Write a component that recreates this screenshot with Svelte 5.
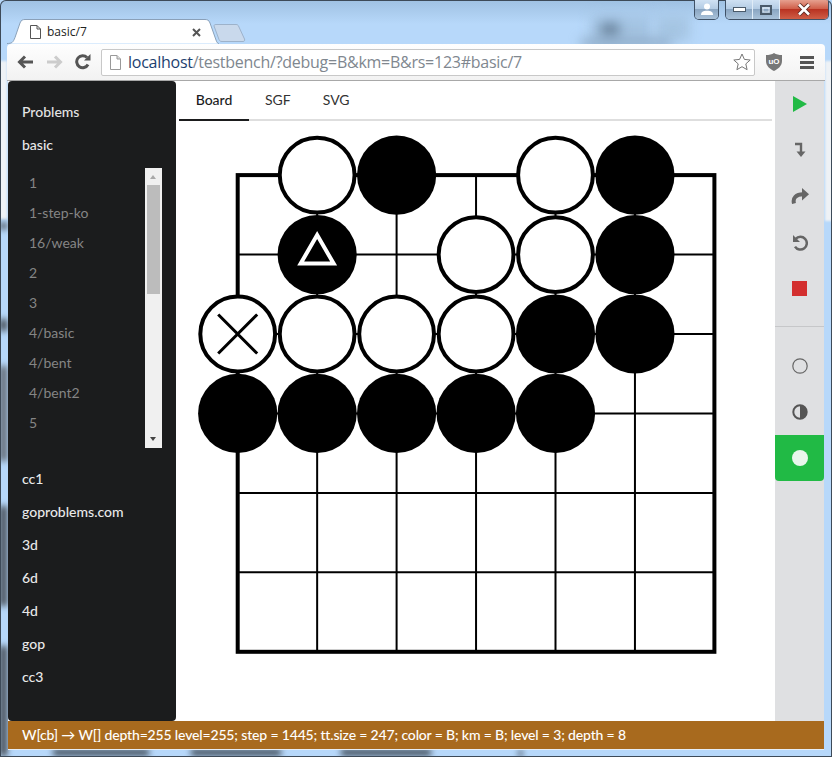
<script lang="ts">
  // Go problem testbench inside a browser window
  const topItems = ['Problems', 'basic']
  const problems = ['1', '1-step-ko', '16/weak', '2', '3', '4/basic', '4/bent', '4/bent2', '5']
  const otherItems = ['cc1', 'goproblems.com', '3d', '6d', '4d', 'gop', 'cc3']
  const tabs = ['Board', 'SGF', 'SVG']
  let activeTab = $state('Board')

  // board geometry, in svg units
  const x0 = 61.7
  const y0 = 54.1
  const step = 79.45
  const lines = [0, 1, 2, 3, 4, 5, 6]
  const px = (i: number) => x0 + i * step
  const py = (i: number) => y0 + i * step

  type Stone = { c: number; r: number; color: 'B' | 'W'; mark?: 'tri' | 'x' }
  const stones: Stone[] = [
    { c: 1, r: 0, color: 'W' }, { c: 2, r: 0, color: 'B' }, { c: 4, r: 0, color: 'W' }, { c: 5, r: 0, color: 'B' },
    { c: 1, r: 1, color: 'B', mark: 'tri' }, { c: 3, r: 1, color: 'W' }, { c: 4, r: 1, color: 'W' }, { c: 5, r: 1, color: 'B' },
    { c: 0, r: 2, color: 'W', mark: 'x' }, { c: 1, r: 2, color: 'W' }, { c: 2, r: 2, color: 'W' }, { c: 3, r: 2, color: 'W' },
    { c: 4, r: 2, color: 'B' }, { c: 5, r: 2, color: 'B' },
    { c: 0, r: 3, color: 'B' }, { c: 1, r: 3, color: 'B' }, { c: 2, r: 3, color: 'B' }, { c: 3, r: 3, color: 'B' }, { c: 4, r: 3, color: 'B' }
  ]
</script>

<div class="window">
  <div class="desktop" aria-hidden="true">
    <i class="blob b1"></i><i class="blob b2"></i><i class="blob b3"></i><i class="blob b4"></i>
    <i class="edge s1"></i><i class="edge s2"></i>
    <i class="edge e1"></i><i class="edge e2"></i><i class="edge e3"></i><i class="edge e8"></i><i class="edge e9"></i>
    <i class="edge e4"></i><i class="edge e5"></i><i class="edge e6"></i><i class="edge e7"></i>
  </div>

  <div class="controls">
    <div class="ctl user">
      <svg width="14" height="13" viewBox="0 0 14 13"><circle cx="7" cy="3.6" r="3" fill="#fff"/><path d="M1 12c0-3 2-4.200 6-4.200s6 1.200 6 4.200z" fill="#fff"/></svg>
    </div>
    <div class="group">
      <div class="ctl min"><svg width="13" height="6" viewBox="0 0 13 6"><rect x=".5" y=".5" width="12" height="4" fill="#fff" stroke="#4a5a6a"/></svg></div>
      <div class="ctl max"><svg width="12" height="10" viewBox="0 0 12 10"><rect x="1" y="1" width="10" height="8" fill="none" stroke="#4a5a6a" stroke-width="2"/><rect x="3" y="3" width="6" height="4" fill="none" stroke="#fff" stroke-width=".6"/></svg></div>
      <div class="ctl close"><svg width="16" height="13" viewBox="0 0 16 13"><path d="M3 1.500l10 10M13 1.500l-10 10" stroke="#5b2a22" stroke-width="4.400"/><path d="M3 1.500l10 10M13 1.500l-10 10" stroke="#fff" stroke-width="2.600"/></svg></div>
    </div>
  </div>

  <div class="tabstrip">
    <div class="tab">
      <svg class="tab-shape" width="212" height="25" viewBox="0 0 212 25"><path d="M0 24.500c5 0 6-1 8-6L13 4c1-3 3-3.500 5-3.500h180c2 0 4 .5 5 3.500l6 17c1 3 2 3.500 3 3.500" fill="#fff" stroke="#8aa0b8"/></svg>
      <svg class="page-icon" width="11" height="14" viewBox="0 0 11 14"><path d="M.5.5h6.500l3.500 3.500v9.500h-10z M7 .5v3.500h3.500" fill="#fff" stroke="#555"/></svg>
      <span class="tab-title">basic/7</span>
      <svg class="tab-x" width="9" height="9" viewBox="0 0 9 9"><path d="M1 1l7 7M8 1l-7 7" stroke="#555" stroke-width="2"/></svg>
    </div>
    <svg class="newtab" width="33" height="18" viewBox="0 0 33 18"><path d="M1 2c0-1 .5-1.500 2-1.500h20c1.500 0 2 .5 2.500 1.500l6 13c.5 1.500 0 2.500-1.500 2.500H9c-1.500 0-2.500-.5-3-2z" fill="#c9d9ec" stroke="#9db2ca"/></svg>
  </div>

  <div class="toolbar">
    <svg class="nav" width="17" height="14" viewBox="0 0 17 14"><path d="M16 7H4M8 1.500 2.500 7 8 12.500" fill="none" stroke="#555" stroke-width="3"/></svg>
    <svg class="nav fwd" width="17" height="14" viewBox="0 0 17 14"><path d="M1 7h12M9 1.500 14.500 7 9 12.500" fill="none" stroke="#ccc" stroke-width="3"/></svg>
    <svg class="nav reload" width="16" height="16" viewBox="0 0 16 16"><path d="M13 10.500A6 6 0 1 1 12 3.500" fill="none" stroke="#555" stroke-width="3"/><path d="M9 6.500h6.500V0z" fill="#555"/></svg>
    <div class="urlbar">
      <svg width="11" height="15" viewBox="0 0 11 15"><path d="M.5.500h6.500l3.500 3.500v10.500h-10z" fill="#fff" stroke="#999"/><path d="M7 .5v3.500h3.500" fill="#ddd" stroke="#999"/></svg>
      <span class="url"><b>localhost</b>/testbench/?debug=B&amp;km=B&amp;rs=123#basic/7</span>
      <svg class="star" width="18" height="18" viewBox="0 0 18 18"><path d="M9 1l2.400 5.400 5.800.6-4.400 3.900 1.300 5.800L9 13.700l-5.100 3 1.300-5.800L.8 7l5.800-.6z" fill="#fff" stroke="#777"/></svg>
    </div>
    <svg class="shield" width="16" height="18" viewBox="0 0 16 18">
      <path d="M8 0c2 1.500 5 2 8 2v6c0 5-4 8-8 10-4-2-8-5-8-10V2c3 0 6-.5 8-2z" fill="#777"/>
      <text x="8" y="11" text-anchor="middle" class="uo">uO</text>
    </svg>
    <div class="burger"><i></i><i></i><i></i></div>
  </div>

  <div class="main">
    <nav class="sidebar">
      {#each topItems as item}
        <div class="item" class:head={item === 'Problems'}>{item}</div>
      {/each}
      <div class="listbox">
        <ul>
          {#each problems as p}
            <li>{p}</li>
          {/each}
        </ul>
        <div class="scrollbar">
          <i class="arrow up"></i>
          <i class="thumb"></i>
          <i class="arrow down"></i>
        </div>
      </div>
      {#each otherItems as item}
        <div class="item">{item}</div>
      {/each}
    </nav>

    <section class="content">
      <div class="tabmenu">
        {#each tabs as t}
          <button type="button" class:active={activeTab === t} onclick={() => activeTab = t}>{t}</button>
        {/each}
      </div>
      <svg class="board" width="596" height="600" viewBox="0 0 596 600">
        {#each lines as i}
          <line x1={px(i)} y1={y0} x2={px(i)} y2={py(6)} stroke="#000" stroke-width="2"/>
          <line x1={x0} y1={py(i)} x2={px(6)} y2={py(i)} stroke="#000" stroke-width="2"/>
        {/each}
        <rect x={x0} y={y0} width={step * 6} height={step * 6} fill="none" stroke="#000" stroke-width="4"/>
        {#each stones as s}
          {#if s.color === 'B'}
            <circle cx={px(s.c)} cy={py(s.r)} r="39.600" fill="#000"/>
          {:else}
            <circle cx={px(s.c)} cy={py(s.r)} r="37.400" fill="#fff" stroke="#000" stroke-width="4"/>
          {/if}
          {#if s.mark === 'tri'}
            <path d="M{px(s.c)} {py(s.r) - 19.500}L{px(s.c) + 16.500} {py(s.r) + 9}H{px(s.c) - 16.500}Z" fill="none" stroke="#fff" stroke-width="4"/>
          {:else if s.mark === 'x'}
            <path d="M{px(s.c) - 19.500} {py(s.r) - 19.500}L{px(s.c) + 19.500} {py(s.r) + 19.500}M{px(s.c) + 19.500} {py(s.r) - 19.500}L{px(s.c) - 19.500} {py(s.r) + 19.500}" stroke="#000" stroke-width="3"/>
          {/if}
        {/each}
      </svg>
    </section>

    <aside class="rail">
      <div class="tool"><svg width="16" height="16" viewBox="0 0 16 16"><path d="M1 0l14 8L1 16z" fill="#21ba45"/></svg></div>
      <div class="tool"><svg width="12" height="16" viewBox="0 0 12 16"><path d="M1 2h6v8" fill="none" stroke="#666" stroke-width="2.400"/><path d="M2.500 9.500h9L7 15z" fill="#666"/></svg></div>
      <div class="tool"><svg width="18" height="16" viewBox="0 0 18 16"><path d="M3 15.500C1.500 10 5 6.300 12 6.300" fill="none" stroke="#666" stroke-width="4"/><path d="M11 0l7 6.300-7 6.300z" fill="#666"/></svg></div>
      <div class="tool"><svg width="16" height="17" viewBox="0 0 16 17"><path d="M3.600 5A6.400 6.400 0 1 1 3 12.600" fill="none" stroke="#666" stroke-width="2.500"/><path d="M1 1v7h7z" fill="#666"/></svg></div>
      <div class="tool"><span class="stop"></span></div>
      <hr />
      <div class="tool"><svg width="16" height="16" viewBox="0 0 16 16"><circle cx="8" cy="8" r="7.200" fill="none" stroke="#666" stroke-width="1.200"/></svg></div>
      <div class="tool"><svg width="16" height="16" viewBox="0 0 16 16"><circle cx="8" cy="8" r="6.700" fill="none" stroke="#555" stroke-width="2"/><path d="M8 1.500a6.500 6.500 0 0 1 0 13z" fill="#555"/></svg></div>
      <div class="tool on"><svg width="16" height="16" viewBox="0 0 16 16"><circle cx="8" cy="8" r="8" fill="#e8f6ec"/></svg></div>
    </aside>
  </div>

  <footer class="status">W[cb] → W[] depth=255 level=255; step = 1445; tt.size = 247; color = B; km = B; level = 3; depth = 8</footer>
</div>

<style>
  :global(body) { margin: 0; background: #b6d7f8; }

  .window {
    position: relative;
    width: 832px;
    height: 757px;
    box-sizing: border-box;
    padding: 0 7px 8px 7px;
    overflow: hidden;
    display: flex;
    flex-direction: column;
    border-radius: 6px 6px 0 0;
    background: linear-gradient(180deg, #9fc1e2 0, #b7d8fa 24px, #b7d8fa 100%);
    box-shadow: inset 0 0 0 1px #3d4a58;
  }

  /* blurred desktop seen through the aero frame */
  .desktop { position: absolute; inset: 1px; overflow: hidden; }
  .blob { position: absolute; filter: blur(6px); }
  .b1 { left: 590px; top: 14px; width: 60px; height: 30px; background: #a3c3e2; }
  .b2 { left: 600px; top: 22px; width: 18px; height: 14px; background: #6c86a0; }
  .b3 { left: 655px; top: 14px; width: 34px; height: 26px; background: #a5c5e3; }
  .b4 { left: 580px; top: 38px; width: 90px; height: 8px; background: #8ba7c2; }
  .edge { position: absolute; background: #20262c; filter: blur(3px); }
  .s1 { left: -3px; top: 60px; width: 9px; height: 158px; background: #eef2f6; filter: blur(1px); }
  .s2 { right: -3px; top: 60px; width: 9px; height: 160px; background: #eef2f6; filter: blur(1px); }
  .e1 { left: -1px; top: 365px; width: 7px; height: 95px; background: #5a5f66; }
  .e2 { left: -1px; top: 505px; width: 7px; height: 100px; background: #3c4046; }
  .e3 { left: -1px; top: 645px; width: 7px; height: 110px; background: #3c4046; }
  .e8 { left: -1px; top: 222px; width: 7px; height: 6px; background: #3c4046; }
  .e9 { left: -1px; top: 318px; width: 7px; height: 12px; background: #3c4046; }
  .e4 { left: 52px; top: 749px; width: 96px; height: 5px; }
  .e5 { left: 190px; top: 749px; width: 90px; height: 5px; }
  .e6 { left: 340px; top: 749px; width: 90px; height: 5px; }
  .e7 { left: 518px; top: 749px; width: 3px; height: 7px; }

  .controls {
    position: absolute;
    top: 0;
    right: 4px;
    display: flex;
    gap: 8px;
    z-index: 2;
  }
  .group { display: flex; border-radius: 0 0 4px 4px; overflow: hidden; box-shadow: 0 0 0 1px #3f5166; }
  .ctl {
    height: 19px;
    display: flex;
    align-items: center;
    justify-content: center;
    background: linear-gradient(180deg, #cfe1f3 0, #b4cce4 45%, #8ba6c2 50%, #a9c2da 100%);
  }
  .user { width: 23px; border-radius: 0 0 4px 4px; box-shadow: 0 0 0 1px #3f5166; }
  .min, .max { width: 27px; border-right: 1px solid #e0ecf7; box-sizing: border-box; }
  .close { width: 48px; background: linear-gradient(180deg, #e6a08f 0, #d0604b 45%, #b93322 50%, #cf5e46 100%); }

  .tabstrip {
    position: relative;
    height: 44px;
    flex: none;
    display: flex;
    align-items: flex-end;
  }
  .tab {
    position: relative;
    width: 212px;
    height: 24px;
    display: flex;
    align-items: center;
    gap: 6px;
    padding-left: 23px;
    box-sizing: border-box;
  }
  .tab-shape { position: absolute; left: 0; top: -1px; }
  .page-icon, .tab-title, .tab-x { position: relative; }
  .tab-title { font: 12px "Open Sans", sans-serif; color: #222; width: 139px; margin-top: -1px; }
  .newtab { margin: 0 0 2px -6px; }

  .toolbar {
    height: 36px;
    flex: none;
    position: relative;
    display: flex;
    align-items: center;
    background: linear-gradient(180deg, #fefefe 0, #f2f2f2 100%);
    border-bottom: 1px solid #a8a8a8;
    border-radius: 4px 4px 0 0;
    padding-left: 10px;
    box-sizing: content-box;
  }
  .nav { flex: none; margin-right: 12px; }
  .nav.reload { margin-right: 10px; margin-left: 0; }
  .urlbar {
    width: 654px;
    height: 27px;
    box-sizing: border-box;
    display: flex;
    align-items: center;
    gap: 7px;
    padding-left: 8px;
    background: #fff;
    border: 1px solid #c8c8c8;
    border-radius: 2px;
    flex: none;
  }
  .url { font: 16px "Open Sans", sans-serif; color: #80878f; white-space: nowrap; flex: 1; letter-spacing: -.26px; }
  .url b { font-weight: 400; color: #1d3f6f; }
  .star { margin-right: 3px; }
  .shield { margin-left: 11px; flex: none; }
  .uo { font: bold 8px "Liberation Sans", sans-serif; fill: #fff; }
  .burger { margin-left: 18px; width: 14px; display: flex; flex-direction: column; gap: 2px; }
  .burger i { height: 3px; background: #555; }

  .main {
    flex: 1;
    min-height: 0;
    display: flex;
    position: relative;
    margin: 0 1px;
    background: #fff;
    font-family: Lato, sans-serif;
    font-size: 14px;
  }

  .sidebar {
    width: 168px;
    flex: none;
    box-sizing: border-box;
    padding-top: 14px;
    background: #1b1c1d;
    border-radius: 4px;
    color: #e9e9e9;
  }
  .item { height: 33px; line-height: 33px; padding-left: 14px; font-weight: 500; font-size: 14px; }
  .item.head { color: #e4e4e4; }
  .listbox {
    display: flex;
    height: 280px;
    margin: 7px 14px 14px 14px;
  }
  .listbox ul {
    list-style: none;
    margin: 0;
    padding: 0 0 0 7px;
    flex: 1;
    overflow: hidden;
    color: #858585;
    font-size: 14px;
  }
  .listbox li { height: 30px; line-height: 30px; }
  .scrollbar {
    width: 17px;
    flex: none;
    position: relative;
    background: #f0f0f0;
  }
  .thumb { position: absolute; left: 2px; right: 2px; top: 17px; height: 109px; background: #bcbcbc; }
  .arrow { position: absolute; left: 5px; border-left: 3.500px solid transparent; border-right: 3.500px solid transparent; }
  .arrow.up { top: 7px; border-bottom: 4px solid #a8a8a8; }
  .arrow.down { bottom: 7px; border-top: 4px solid #444; }

  .content { flex: 1; min-width: 0; padding: 0 3px; display: flex; flex-direction: column; }
  .tabmenu { display: flex; height: 38px; border-bottom: 2px solid #dedede; flex: none; }
  .tabmenu button {
    font: 14px Lato, sans-serif;
    color: #333;
    background: none;
    border: 0;
    margin: 0 0 -2px 0;
    padding: 0 16px 2px;
    cursor: pointer;
    border-bottom: 2px solid transparent;
  }
  .tabmenu button.active { width: 70px; font-weight: 500; color: #1b1c1d; border-bottom-color: #1b1c1d; }
  .board { display: block; margin-top: 0; margin-left: -3px; flex: none; }

  .rail {
    width: 49px;
    flex: none;
    background: #dfe0e2;
    display: flex;
    flex-direction: column;
  }
  .tool { height: 46px; display: flex; align-items: center; justify-content: center; flex: none; }
  .tool.on { background: #21ba45; border-radius: 0 0 4px 4px; }
  .stop { width: 15px; height: 15px; background: #d32f2f; }
  .rail hr { width: 100%; height: 1px; border: 0; margin: 15px 0 16px; background: #c6c7c9; }

  .status {
    height: 28px;
    line-height: 28px;
    flex: none;
    margin: 0 1px;
    padding-left: 14px;
    background: #a86a1e;
    color: #fff;
    font: 500 14px/28px Lato, sans-serif;
    letter-spacing: -.16px;
    box-sizing: border-box;
    white-space: nowrap;
    position: relative;
    box-shadow: 0 1px 0 #e6eef6;
  }
</style>
